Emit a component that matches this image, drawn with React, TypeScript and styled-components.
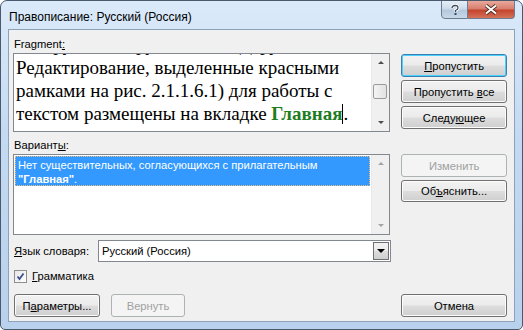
import React from "react";
import styled, { createGlobalStyle } from "styled-components";

const GlobalStyle = createGlobalStyle`
    body {
        margin: 0;
        background: #ffffff;
        font-family: "Liberation Sans", Arial, sans-serif;
        font-size: 11.2px;
        color: #000;
    }
`

const Window = styled.div`
    width: 523px;
    height: 330px;
    box-sizing: border-box;
    border: 1px solid #4a5a6c;
    border-radius: 7px 7px 5px 5px;
    background: linear-gradient(180deg, #dbeafa 0%, #c4daf2 40%, #b8d1ec 100%);
    padding: 0 7px 7px 7px;
    display: flex;
    flex-direction: column;
    overflow: hidden;
`

const TitleBar = styled.div`
    height: 28px;
    display: flex;
    align-items: flex-start;
`

const Title = styled.div`
    flex: 1;
    padding: 9px 0 0 1px;
    font-size: 12px;
    color: #000;
`

const CaptionButton = styled.div<{ $close?: boolean }>`
    height: 19px;
    width: ${p => (p.$close ? "47px" : "27px")};
    margin-top: -1px;
    box-sizing: border-box;
    border: 1px solid #6d7d8f;
    border-radius: ${p => (p.$close ? "0 0 4px 0" : "0 0 0 4px")};
    border-left: ${p => (p.$close ? "none" : "1px solid #6d7d8f")};
    background: ${p => p.$close
        ? "linear-gradient(180deg, #e9a99c 0%, #d77f6e 45%, #c5442c 55%, #d4715a 100%)"
        : "linear-gradient(180deg, #e6eef7 0%, #ccdbea 45%, #b5c8dc 55%, #c7d8ea 100%)"};
    display: flex;
    align-items: center;
    justify-content: center;
`

const Client = styled.div`
    flex: 1;
    background: #f0f0f0;
    border: 1px solid #8da2b8;
    padding: 7px 7px 0 4px;
    display: flex;
    flex-direction: column;
`

const Row = styled.div<{ $gap?: number }>`
    display: flex;
    gap: 11px;
    margin-top: ${p => p.$gap ?? 0}px;
`

const LeftCol = styled.div`
    width: 378px;
    display: flex;
    flex-direction: column;
`

const RightCol = styled.div<{ $top: number }>`
    width: 106px;
    padding-top: ${p => p.$top}px;
    display: flex;
    flex-direction: column;
    gap: 3px;
`

const Label = styled.div`
    height: 16px;
    line-height: 15px;
    padding-left: 1px;
`

const Key = styled.span`
    text-decoration: underline;
`

const TextBox = styled.div<{ $h: number }>`
    height: ${p => p.$h}px;
    box-sizing: border-box;
    border: 1px solid #828790;
    background: #fff;
    display: flex;
    overflow: hidden;
`

const FragmentText = styled.div`
    flex: 1;
    padding-left: 2px;
    font-family: "Liberation Serif", "Times New Roman", serif;
    font-size: 19px;
    line-height: 23px;
    margin-top: -21px;
    white-space: nowrap;
`

const Green = styled.b`
    color: #1e7d1e;
`

const Caret = styled.span`
    display: inline-block;
    width: 1px;
    height: 20px;
    background: #000;
    vertical-align: -4px;
`

const ScrollBar = styled.div`
    width: 17px;
    background: #f0f0f0;
    border-left: 1px solid #e8e8e8;
    display: flex;
    flex-direction: column;
    align-items: center;
    justify-content: space-between;
    position: relative;
`

const Arrow = styled.div<{ $down?: boolean; $dim?: boolean }>`
    width: 17px;
    height: 17px;
    display: flex;
    align-items: center;
    justify-content: center;
    &::after {
        content: "";
        border-left: 3px solid transparent;
        border-right: 3px solid transparent;
        ${p => p.$down ? "border-top" : "border-bottom"}: 3px solid ${p => (p.$dim ? "#a3a3a3" : "#4d4d4d")};
    }
`

const Thumb = styled.div`
    position: absolute;
    left: 1px;
    top: 30px;
    width: 14px;
    height: 15px;
    box-sizing: border-box;
    border: 1px solid #9a9a9a;
    border-radius: 2px;
    background: linear-gradient(90deg, #f3f3f3, #e2e2e2);
`

const List = styled.div`
    flex: 1;
    padding: 1px;
`

const Selected = styled.div`
    background: #3399ff;
    color: #fff;
    border: 1px dotted #f0c080;
    padding: 1px 2px 0 2px;
    line-height: 14px;
    height: 30px;
    box-sizing: border-box;
`

const Button = styled.button<{ $w?: number; $focus?: boolean }>`
    width: ${p => (p.$w ? `${p.$w}px` : "100%")};
    height: 23px;
    box-sizing: border-box;
    border: 1px solid ${p => (p.$focus ? "#3c7fb1" : "#707070")};
    box-shadow: ${p => (p.$focus ? "inset 0 0 0 1px #48d1ff" : "inset 0 0 0 1px #fcfcfc")};
    border-radius: 3px;
    background: linear-gradient(180deg, #f2f2f2 0%, #ebebeb 49%, #dddddd 51%, #cfcfcf 100%);
    font-family: "Liberation Sans", Arial, sans-serif;
    font-size: 11.2px;
    color: #000;
    padding: 0;
    &:disabled {
        border-color: #adb2b5;
        background: #f4f4f4;
        box-shadow: none;
        color: #a0a0a0;
    }
`

const LangRow = styled.div`
    display: flex;
    align-items: center;
    width: 378px;
    margin-top: 5px;
`

const LangLabel = styled.div`
    width: 84px;
    padding-left: 1px;
`

const Select = styled.div`
    flex: 1;
    height: 22px;
    box-sizing: border-box;
    border: 1px solid #828790;
    background: #fff;
    display: flex;
    align-items: center;
    padding-left: 3px;
`

const SelectText = styled.div`
    flex: 1;
`

const DropButton = styled.div`
    width: 16px;
    height: 18px;
    margin-right: 1px;
    box-sizing: border-box;
    border: 1px solid #707070;
    background: linear-gradient(180deg, #f2f2f2 0%, #ebebeb 49%, #dddddd 51%, #cfcfcf 100%);
    display: flex;
    align-items: center;
    justify-content: center;
    &::after {
        content: "";
        border-left: 4px solid transparent;
        border-right: 4px solid transparent;
        border-top: 4px solid #000;
    }
`

const CheckRow = styled.div`
    display: flex;
    align-items: center;
    gap: 5px;
    height: 14px;
    margin-top: 7px;
    padding-left: 1px;
`

const CheckBox = styled.div`
    width: 13px;
    height: 13px;
    box-sizing: border-box;
    border: 1px solid #8e8f8f;
    background: linear-gradient(135deg, #e6e6e6, #ffffff);
    display: flex;
    align-items: center;
    justify-content: center;
`

const BottomRow = styled.div`
    display: flex;
    gap: 11px;
    margin-top: 11px;
    padding-left: 1px;
`

const Spacer = styled.div`
    flex: 1;
`

export default function App() {
    return (
        <>
            <GlobalStyle />
            <Window>
                <TitleBar>
                    <Title>Правописание: Русский (Россия)</Title>
                    <CaptionButton>
                        <svg width="10" height="12" viewBox="0 0 10 12">
                            <path d="M2 4 Q2 1.5 5 1.5 Q8 1.5 8 4 Q8 5.5 5.5 6.5 L5.5 8" fill="none" stroke="#fff" strokeWidth="3" />
                            <path d="M2 4 Q2 1.5 5 1.5 Q8 1.5 8 4 Q8 5.5 5.5 6.5 L5.5 8" fill="none" stroke="#3c4a5a" strokeWidth="1.3" />
                            <rect x="4.5" y="9" width="2" height="2" fill="#3c4a5a" />
                        </svg>
                    </CaptionButton>
                    <CaptionButton $close>
                        <svg width="14" height="11" viewBox="0 0 14 11">
                            <path d="M2 1.5 L12 9.5 M12 1.5 L2 9.5" stroke="#4a2a22" strokeWidth="3.6" />
                            <path d="M2 1.5 L12 9.5 M12 1.5 L2 9.5" stroke="#fff" strokeWidth="2" />
                        </svg>
                    </CaptionButton>
                </TitleBar>
                <Client>
                    <Row>
                        <LeftCol>
                            <Label>Fragment<Key>:</Key></Label>
                            <TextBox $h={79}>
                                <FragmentText>
                                    инструменты группы Абзац (группа<br />
                                    Редактирование, выделенные красными<br />
                                    рамками на рис. 2.1.1.6.1) для работы с<br />
                                    текстом размещены на вкладке <Green>Главная</Green><Caret />.
                                </FragmentText>
                                <ScrollBar>
                                    <Arrow />
                                    <Thumb />
                                    <Arrow $down />
                                </ScrollBar>
                            </TextBox>
                        </LeftCol>
                        <RightCol $top={17}>
                            <Button $focus><Key>П</Key>ропустить</Button>
                            <Button>Пропустить <Key>в</Key>се</Button>
                            <Button>Следу<Key>ю</Key>щее</Button>
                        </RightCol>
                    </Row>
                    <Row $gap={6}>
                        <LeftCol>
                            <Label>Вариант<Key>ы</Key>:</Label>
                            <TextBox $h={81}>
                                <List>
                                    <Selected>
                                        Нет существительных, согласующихся с прилагательным<br />
                                        <b>"Главная"</b>.
                                    </Selected>
                                </List>
                                <ScrollBar>
                                    <Arrow $dim />
                                    <Arrow $down $dim />
                                </ScrollBar>
                            </TextBox>
                        </LeftCol>
                        <RightCol $top={16}>
                            <Button disabled>Изменить</Button>
                            <Button style={{ height: 22 }}>Об<Key>ъ</Key>яснить...</Button>
                        </RightCol>
                    </Row>
                    <LangRow>
                        <LangLabel><Key>Я</Key>зык словаря:</LangLabel>
                        <Select>
                            <SelectText>Русский (Россия)</SelectText>
                            <DropButton />
                        </Select>
                    </LangRow>
                    <CheckRow>
                        <CheckBox>
                            <svg width="9" height="9" viewBox="0 0 9 9">
                                <path d="M1.5 4.5 L3.5 7 L7.5 1.5" fill="none" stroke="#3a4f90" strokeWidth="1.8" />
                            </svg>
                        </CheckBox>
                        <span><Key>Г</Key>рамматика</span>
                    </CheckRow>
                    <BottomRow>
                        <Button $w={86}>П<Key>а</Key>раметры...</Button>
                        <Button $w={74} disabled>Вернуть</Button>
                        <Spacer />
                        <Button $w={106}>Отмена</Button>
                    </BottomRow>
                </Client>
            </Window>
        </>
    );
}
